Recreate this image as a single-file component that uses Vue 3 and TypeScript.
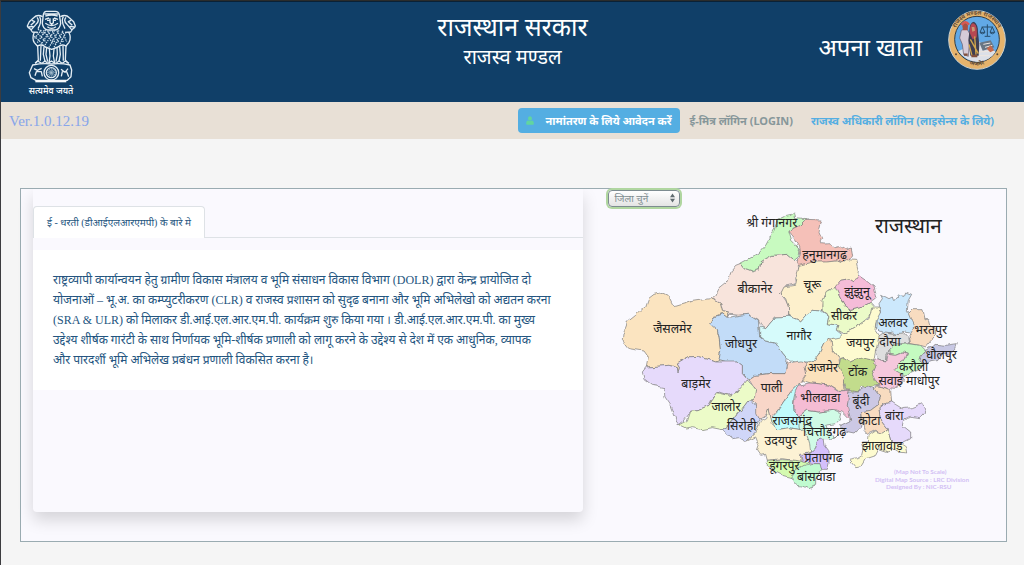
<script setup lang="ts">
import { ref } from 'vue'

interface District {
  name: string
  fill: string
  points: string
  x: number
  y: number
}

const selected = ref('')

const districts: District[] = [
  { name: 'बीकानेर', fill: '#f8e4dc', x: 438, y: 308, points: '393,220 405,235 430,244 450,238 455,215 470,205 490,195 535,192 545,200 555,208 570,215 565,225 573,240 560,260 563,280 530,287 515,310 530,330 540,350 538,380 500,380 470,415 455,405 448,390 415,372 390,375 365,372 355,382 362,365 340,360 335,340 318,330 305,325 320,315 330,295 355,275 368,240 380,225' },
  { name: 'श्री गंगानगर', fill: '#c8fac0', x: 488, y: 110, points: '393,220 430,200 450,188 470,165 495,120 505,90 530,78 545,75 557,66 560,85 595,88 575,105 537,123 545,150 560,165 573,180 570,195 555,208 545,200 535,192 490,195 470,205 455,215 450,238 430,244 405,235' },
  { name: 'हनुमानगढ़', fill: '#f5c0b8', x: 647, y: 206, points: '590,90 637,92 632,115 630,130 638,147 632,157 650,158 665,157 675,170 690,166 710,178 727,173 731,200 720,212 700,218 685,212 650,216 610,216 570,228 563,217 575,190 572,170 560,150 537,123 575,105' },
  { name: 'चूरू', fill: '#fdf0cc', x: 610, y: 296, points: '570,225 610,215 650,215 685,212 700,218 715,208 740,210 748,240 745,265 735,275 720,265 695,270 682,290 660,300 645,320 642,355 640,362 610,360 590,375 575,392 560,385 540,378 538,350 530,325 515,310 525,290 560,285 565,250' },
  { name: 'जैसलमेर', fill: '#fbe4c0', x: 190, y: 428, points: '305,325 250,333 200,348 190,340 178,315 160,306 135,312 118,325 110,348 80,375 55,395 42,430 40,450 60,475 105,482 118,500 112,530 145,528 180,525 205,532 207,548 212,530 205,518 235,500 265,498 300,508 320,515 330,510 335,480 330,440 325,420 305,400 310,380 340,370 355,382 362,365 340,360 335,340 318,330' },
  { name: 'जोधपुर', fill: '#c2dcf8', x: 396, y: 473, points: '302,400 310,382 340,370 355,382 390,375 415,372 448,392 452,440 470,452 500,458 518,485 535,505 528,550 480,550 440,555 420,568 400,550 400,525 385,515 360,520 345,515 330,510 335,480 330,440 325,420' },
  { name: 'नागौर', fill: '#d6fbfb', x: 570, y: 449, points: '452,410 470,415 500,380 540,378 575,392 590,375 610,360 640,362 660,375 655,400 690,405 685,420 705,435 695,445 665,445 645,460 630,490 615,515 585,515 560,517 535,505 518,485 500,458 470,452 452,440' },
  { name: 'सीकर', fill: '#ebfbc8', x: 705, y: 388, points: '682,290 690,315 705,345 725,360 760,350 785,335 795,345 780,380 755,400 725,420 705,430 685,418 690,405 655,400 660,375 642,360 642,330 655,303' },
  { name: 'झुंझुनू', fill: '#f5bcd8', x: 744, y: 317, points: '695,270 720,265 735,275 748,255 770,270 795,290 803,320 785,335 760,350 725,360 705,345 690,315 678,290' },
  { name: 'जयपुर', fill: '#fdfbd0', x: 754, y: 469, points: '785,370 788,350 810,350 815,370 800,400 798,420 812,440 808,465 800,480 795,510 760,505 725,515 705,502 690,505 670,480 665,460 670,445 695,440 705,430 725,420 755,400 780,385' },
  { name: 'अलवर', fill: '#cce8fc', x: 852, y: 411, points: '815,365 810,340 820,325 815,312 840,325 850,320 855,335 870,315 885,318 890,305 908,312 898,330 895,360 910,380 915,400 910,430 890,425 875,432 850,425 830,430 810,425 800,415 802,390' },
  { name: 'भरतपुर', fill: '#f8dcc0', x: 965, y: 431, points: '898,370 910,358 942,358 948,385 960,385 965,405 980,415 980,435 975,440 950,470 935,465 905,460 900,435 915,410' },
  { name: 'दौसा', fill: '#dedede', x: 843, y: 468, points: '810,440 830,425 855,430 885,428 900,445 903,462 880,460 860,460 840,480 830,500 830,515 810,510 800,480' },
  { name: 'करौली', fill: '#c4fac0', x: 914, y: 543, points: '840,480 855,465 900,460 935,465 950,480 935,495 935,515 945,530 915,545 885,558 870,550 855,535 875,515 890,505 895,488 880,485 860,495 840,492' },
  { name: 'धौलपुर', fill: '#c8c8e4', x: 997, y: 505, points: '935,500 950,480 965,470 980,462 1010,465 1045,460 1040,475 1020,495 1000,490 990,510 960,515 945,522 932,512' },
  { name: 'सवाई माधोपुर', fill: '#f5c8dc', x: 900, y: 583, points: '795,505 810,510 830,515 835,492 860,495 885,485 895,490 888,508 872,518 855,538 885,555 882,575 860,585 845,598 815,592 795,585 785,560 795,540' },
  { name: 'अजमेर', fill: '#fbe2bc', x: 641, y: 545, points: '630,490 645,460 665,445 670,480 690,505 693,530 710,555 703,580 705,600 685,600 660,585 630,580 605,578 580,570 565,580 590,555 585,530 595,518 615,510' },
  { name: 'टोंक', fill: '#c2dc8c', x: 746, y: 558, points: '695,505 705,502 725,515 760,503 795,510 800,530 790,550 800,570 810,585 780,590 760,588 745,605 710,598 703,575 710,560 698,545 690,525' },
  { name: 'पाली', fill: '#f8d6c8', x: 488, y: 606, points: '420,568 440,555 480,550 528,550 535,518 575,512 595,518 585,530 590,555 575,580 565,585 545,605 530,625 510,655 485,685 480,655 475,670 450,688 435,670 440,640 430,630 435,610 440,600' },
  { name: 'बाड़मेर', fill: '#e6dafb', x: 261, y: 594, points: '112,530 145,528 180,525 205,532 207,548 212,530 205,518 235,500 265,498 300,508 320,515 345,515 385,515 400,525 400,550 415,568 405,590 385,605 360,615 330,605 310,625 300,645 270,658 245,660 225,690 207,703 195,670 185,645 168,620 165,592 130,585 105,565 100,545' },
  { name: 'जालोर', fill: '#ecfbc8', x: 351, y: 663, points: '207,705 235,690 245,660 270,658 300,645 325,607 360,615 385,605 415,568 440,600 435,630 415,635 400,655 385,670 370,690 360,705 340,718 310,712 280,718 250,712 230,716' },
  { name: 'सिरोही', fill: '#d0d6f8', x: 398, y: 718, points: '415,635 430,632 440,650 440,670 450,690 440,710 440,725 410,753 390,742 370,745 345,725 340,718 360,705' },
  { name: 'राजसमंद', fill: '#c0fbfb', x: 550, y: 703, points: '485,685 500,670 510,655 530,625 545,605 565,585 575,580 580,590 560,600 553,630 555,660 570,678 600,688 600,720 585,740 575,718 540,712 505,718 490,700' },
  { name: 'चित्तौड़गढ़', fill: '#d0fbe6', x: 647, y: 737, points: '570,682 595,660 630,665 670,660 695,670 690,690 680,700 650,705 660,720 675,740 700,730 665,745 645,745 628,745 620,770 600,790 585,770 575,730 570,710' },
  { name: 'उदयपुर', fill: '#fcf2d4', x: 515, y: 763, points: '480,655 485,680 490,700 505,718 540,712 575,718 595,735 602,760 605,785 575,795 576,815 550,810 520,805 475,810 470,792 455,795 445,780 450,765 440,740 412,753 440,725 455,690 470,682' },
  { name: 'भीलवाडा', fill: '#f5bcd4', x: 634, y: 636, points: '570,585 600,578 630,580 660,585 685,602 720,600 720,625 715,645 725,665 725,690 700,665 670,660 630,665 595,660 570,680 555,665 555,640 560,610' },
  { name: 'बूंदी', fill: '#ccc8e4', x: 756, y: 643, points: '720,605 745,605 775,585 795,595 815,620 805,645 785,660 760,665 755,710 735,728 705,722 695,705 725,690 715,645' },
  { name: 'कोटा', fill: '#f8dcc0', x: 781, y: 703, points: '800,590 815,592 845,600 848,635 825,642 810,655 815,690 835,715 820,730 800,720 775,732 765,720 758,665 785,660 805,645 815,620 795,595' },
  { name: 'बांरा', fill: '#e6dafb', x: 856, y: 690, points: '825,642 848,635 880,655 910,652 940,640 950,665 935,682 905,678 885,685 880,705 905,725 905,745 875,760 845,750 835,715 815,690 810,655' },
  { name: 'झालावाड़', fill: '#fdfbd0', x: 820, y: 780, points: '780,735 800,722 820,728 835,718 845,750 875,760 890,770 893,788 865,785 850,775 840,785 810,775 800,795 770,805 755,830 740,832 722,810 745,805 760,795 765,775 760,755 778,755' },
  { name: 'डूंगरपुर', fill: '#d4fab0', x: 526, y: 838, points: '475,810 520,808 560,810 600,817 590,830 565,850 550,863 520,855 490,840 475,828' },
  { name: 'बांसवाडा', fill: '#c0fbd0', x: 622, y: 872, points: '560,840 585,825 610,820 638,820 635,840 620,865 620,885 600,895 585,888 565,885 545,860' },
  { name: 'प्रतापगढ', fill: '#d4c0fb', x: 644, y: 816, points: '620,770 628,745 642,742 645,765 660,785 660,820 655,840 635,840 630,820 605,818 580,815 575,792 600,790' },
]

const spokes = Array.from({ length: 12 }, (_, i) => i * 30)
</script>

<template>
  <div class="page">
    <header class="banner">
      <svg class="emblem" viewBox="0 0 150 258" role="img" aria-label="सत्यमेव जयते">
        <g fill="none" stroke="#e4edf4" stroke-width="4" stroke-linejoin="round">
          <path d="M52 14 Q54 3 62 4 L88 4 Q98 4 100 14 L104 40 Q101 58 88 60 L64 60 Q51 56 49 40Z" />
          <path d="M55 12 H98 M58 18 Q77 13 95 18 M57 28 L69 24 M84 24 L96 28 M63 31 H70 M83 31 H90 M72 25 V38 L77 43 L82 38 V25 M58 40 Q77 54 96 40 M64 50 Q77 60 90 50 M70 46 H84" />
          <path d="M50 20 Q34 12 23 23 L10 35 L4 48 Q6 55 13 57 L19 66 L36 67 M18 31 L26 35 L14 46 M33 22 Q42 32 30 43 L16 59 M41 20 Q49 34 36 56 M8 51 L22 49" />
          <path d="M103 20 Q119 12 130 23 L143 35 L148 48 Q147 55 140 57 L134 66 L117 67 M135 31 L127 35 L139 46 M120 22 Q111 32 123 43 L137 59 M112 20 Q104 34 117 56 M145 51 L131 49" />
          <path d="M25 66 Q17 85 25 98 L34 108 Q48 101 58 111 L77 118 L96 111 Q107 101 120 108 L129 97 Q137 83 128 66" />
          <path d="M35 108 L37 151 L28 160 M45 108 L43 152 M54 111 L52 133 L57 154 M62 113 L60 133 L65 155 M70 117 L72 138 L69 160 M84 117 L82 138 L86 160 M93 112 L94 133 L90 155 M101 110 L103 133 L99 154 M111 108 L112 152 M120 108 L118 150 L127 160" />
          <path d="M27 160 L35 153 L47 160 M48 160 L57 153 L65 160 M67 160 L76 153 L88 160 M90 160 L99 153 L108 160 M109 160 L118 153 L129 160" />
          <path d="M20 165 Q50 159 77 162 Q105 159 132 165 L137 180 L135 200 L124 211 H30 L15 203 L10 188Z" />
          <circle cx="76" cy="188" r="22" />
          <circle cx="76" cy="188" r="15" />
          <path d="M24 176 L34 181 L47 175 M27 197 L31 185 H46 L49 199 M126 176 L117 187 L105 178 M106 199 L109 185 H122 L128 200" />
        </g>
        <g fill="none" stroke="#cbdce8" stroke-width="4" stroke-dasharray="4 3">
          <path d="M36 57 L54 73 M31 66 L61 97 M25 78 L51 104 M52 61 L82 102 M65 63 L89 100 M79 62 L99 99 M93 62 L113 98 M109 62 L122 96 M120 67 L101 104 M110 65 L84 112 M99 61 L69 112 M86 61 L57 105 M73 61 L45 104 M59 60 L34 98 M46 60 L25 86" />
        </g>
        <g fill="none" stroke="#a7bfd0" stroke-width="2">
          <path v-for="angle in spokes" :key="angle" d="M76 188 V174" :transform="`rotate(${angle} 76 188)`" />
        </g>
        <path d="M28 211 H121 V217 H28Z" fill="#f4f7fa" />
        <text x="75" y="251" text-anchor="middle" class="motto">सत्यमेव जयते</text>
      </svg>
      <div class="titles">
        <h1>राजस्थान सरकार</h1>
        <h2>राजस्व मण्डल</h2>
      </div>
      <div class="brand">
        <span class="brand-name">अपना खाता</span>
        <svg class="seal" viewBox="0 0 174 180" role="img" aria-label="राजस्व मण्डल राजस्थान अजमेर">
          <defs>
            <path id="seal-top" d="M18 109 A72 74 0 1 1 156 109" />
            <path id="seal-bottom" d="M41 146 Q87 188 133 146" />
          </defs>
          <ellipse cx="87" cy="90" rx="85" ry="88" fill="#e5b36c" stroke="#c9d0cf" stroke-width="3" />
          <ellipse cx="87" cy="88" rx="67" ry="69" fill="#62a9e6" stroke="#343d42" stroke-width="3" />
          <path d="M31 124 L92 94 L143 126 Q125 153 87 157 Q51 151 31 124Z" fill="#dce0e8" />
          <path d="M94 98 L128 91 L139 112 L104 122Z" fill="#687684" />
          <path d="M106 103 L127 99 M111 112 L133 106 M85 126 L140 124 M78 137 L125 137" stroke="#eee6df" stroke-width="3" />
          <path d="M116 116 L128 106 L139 121 L127 127Z" fill="#c5694d" />
          <path d="M40 61 L56 55 L66 73 L61 139 L47 134 L43 103 L35 84Z" fill="#d5cbd8" stroke="#665868" stroke-width="2" />
          <path d="M43 47 Q50 30 60 46 L59 61 L45 61Z" fill="#a65143" />
          <path d="M41 45 Q52 29 63 44" fill="none" stroke="#d95850" stroke-width="7" />
          <path d="M64 67 Q64 36 78 35 Q91 44 90 67 L94 104 L92 137 H67 L61 91Z" fill="#3e3e52" />
          <path d="M65 68 Q66 35 79 41 Q89 47 86 82 L74 88Z" fill="#b64852" />
          <path d="M71 51 L79 51 L81 62 L73 65Z" fill="#c99a76" />
          <path d="M67 88 L91 131 M80 79 L84 134 M63 103 L72 137" stroke="#d1a64d" stroke-width="4" />
          <path d="M48 134 H59 M70 138 H88" stroke="#814f3b" stroke-width="7" />
          <g fill="none" stroke="#294e6c" stroke-width="3">
            <path d="M118 43 V78 M101 51 H135 M103 51 L96 67 H111 L103 51 M133 51 L126 67 H140 L133 51 M110 79 H127" />
            <path d="M96 68 Q103 75 111 68 M126 68 Q133 75 140 68" />
          </g>
          <circle cx="24" cy="133" r="3" fill="#5c4938" />
          <circle cx="148" cy="133" r="3" fill="#5c4938" />
          <text class="seal-text"><textPath href="#seal-top" startOffset="50%" text-anchor="middle">राजस्व मण्डल राजस्थान</textPath></text>
          <text class="seal-text"><textPath href="#seal-bottom" startOffset="50%" text-anchor="middle">अजमेर</textPath></text>
        </svg>
      </div>
    </header>

    <nav class="nav">
      <span class="version">Ver.1.0.12.19</span>
      <div class="links">
        <button type="button" class="apply">
          <svg class="user" viewBox="0 0 24 28" aria-hidden="true">
            <path d="M12 1 C8 1 6 4 6 8 C6 12 8 15 12 15 C16 15 18 12 18 8 C18 4 16 1 12 1Z M6 14 C2 15 0 18 0 24 Q0 27 3 27 H21 Q24 27 24 24 C24 18 22 15 18 14 Q12 19 6 14Z" fill="#61d5a0" />
          </svg>
          <span>नामांतरण के लिये आवेदन करें</span>
        </button>
        <a href="#login" class="login">ई-मित्र लॉगिन (LOGIN)</a>
        <a href="#officer" class="officer">राजस्व अधिकारी लॉगिन (लाइसेन्स के लिये)</a>
      </div>
    </nav>

    <main class="frame">
      <section class="card">
        <div class="tabs" role="tablist">
          <button id="about-tab" type="button" class="tab" role="tab" aria-selected="true" aria-controls="about">ई - धरती (डीआईएलआरएमपी) के बारे मे</button>
        </div>
        <div id="about" class="about" role="tabpanel" aria-labelledby="about-tab">
          <p>
            राष्ट्रव्यापी कार्यान्वयन हेतु ग्रामीण विकास मंत्रालय व भूमि संसाधन विकास विभाग (DOLR) द्वारा केन्द्र प्रायोजित दो<br>
            योजनाओं – भू.अ. का कम्प्युटरीकरण (CLR) व राजस्व प्रशासन को सुदृढ बनाना और भूमि अभिलेखो को अद्यतन करना<br>
            (SRA &amp; ULR) को मिलाकर डी.आई.एल.आर.एम.पी. कार्यक्रम शुरु किया गया । डी.आई.एल.आर.एम.पी. का मुख्य<br>
            उद्देश्य शीर्षक गारंटी के साथ निर्णायक भूमि-शीर्षक प्रणाली को लागू करने के उद्देश्य से देश में एक आधुनिक, व्यापक<br>
            और पारदर्शी भूमि अभिलेख प्रबंधन प्रणाली विकसित करना है।
          </p>
        </div>
      </section>

      <section class="map-side">
        <div class="picker">
          <select v-model="selected" aria-label="जिला चुनें">
            <option value="">जिला चुनें</option>
            <option v-for="d in districts" :key="d.name" :value="d.name">{{ d.name }}</option>
          </select>
          <svg class="arrows" viewBox="0 0 12 24" aria-hidden="true"><path d="M6 1 L12 10 H0Z M6 23 L0 14 H12Z" fill="#5f6b6f" /></svg>
        </div>
        <svg class="map" viewBox="0 50 1110 860" role="img" aria-label="राजस्थान">
          <defs>
            <filter id="border-detail" x="-5%" y="-5%" width="110%" height="110%">
              <feTurbulence type="fractalNoise" baseFrequency="0.04" numOctaves="2" seed="4" result="noise" />
              <feDisplacementMap in="SourceGraphic" in2="noise" scale="14" xChannelSelector="R" yChannelSelector="G" />
            </filter>
          </defs>
          <g filter="url(#border-detail)" stroke="#777" stroke-width="2" stroke-linejoin="round">
            <polygon v-for="d in districts" :key="d.name" :points="d.points" :fill="d.fill" />
          </g>
          <g class="labels">
            <text v-for="d in districts" :key="d.name" :x="d.x" :y="d.y">{{ d.name }}</text>
          </g>
          <text class="state" x="898" y="129">राजस्थान</text>
          <g class="credit">
            <text x="934" y="850">(Map Not To Scale)</text>
            <text x="939" y="874">Digital Map Source : LRC Division</text>
            <text x="929" y="895">Designed By : NIC-RSU</text>
          </g>
        </svg>
      </section>
    </main>
  </div>
</template>

<style>
body {
  margin: 0;
  background: #f5f5f5;
}
</style>

<style scoped>
.page {
  box-sizing: border-box;
  min-height: 100vh;
  border-left: 1px solid #3c3c3f;
  border-top: 1px solid #2b2c2b;
  background: #f5f5f5;
  font-family: "Noto Sans", "Noto Sans Devanagari", sans-serif;
}
.banner {
  display: grid;
  grid-template-columns: 1fr auto 1fr;
  height: 101px;
  border-top: 1px solid #0a2136;
  box-sizing: border-box;
  background: #103f68;
  color: #fff;
}
.emblem {
  width: 50px;
  height: 86px;
  margin: 8px 0 0 25px;
}
.motto {
  fill: #fff;
  font-size: 27px;
  font-weight: 500;
}
.titles {
  text-align: center;
  padding-top: 7px;
}
h1, h2 {
  margin: 0;
  font-weight: 400;
}
h1 {
  font-size: 25px;
  line-height: 34px;
}
h2 {
  font-size: 20px;
  line-height: 28px;
}
.brand {
  display: flex;
  justify-content: flex-end;
  align-items: flex-start;
  gap: 26px;
  padding: 8px 18px 0 0;
}
.brand-name {
  font-size: 24px;
  line-height: 34px;
  padding-top: 20px;
}
.seal {
  width: 58px;
  height: 60px;
}
.seal-text {
  fill: #574332;
  font-size: 18px;
  font-weight: 600;
}
.nav {
  display: flex;
  align-items: center;
  justify-content: space-between;
  height: 37px;
  box-sizing: border-box;
  padding: 0 30px 0 8px;
  background: #e8e0d6;
}
.version {
  font: 15px/20px "Liberation Serif", serif;
  color: #87a5ea;
}
.links {
  display: flex;
  align-items: center;
}
.links a {
  font-size: 11px;
  font-weight: 700;
  text-decoration: none;
  white-space: nowrap;
}
.apply {
  display: flex;
  align-items: center;
  gap: 12px;
  height: 25px;
  padding: 0 8px;
  border: 0;
  border-radius: 4px;
  background: #54aee2;
  color: #fff;
  font: 700 11px/20px "Noto Sans", "Noto Sans Devanagari", sans-serif;
  white-space: nowrap;
}
.user {
  width: 8px;
  height: 9px;
}
.login {
  margin-left: 10px;
  color: #87979a;
}
.officer {
  margin-left: 18px;
  color: #54aee2;
}
.frame {
  display: grid;
  grid-template-columns: minmax(0, 551fr) minmax(0, 423fr);
  box-sizing: border-box;
  height: 354px;
  margin: 49px 17px 0 19px;
  padding-left: 12px;
  border: 1px solid #9aabb1;
  background: #faf9fe;
}
.card {
  height: 323px;
  border-radius: 0 0 4px 4px;
  background: #faf9fe;
  box-shadow: 0 8px 16px rgba(0, 0, 0, 0.15);
  clip-path: inset(0 -30px -30px -30px);
  color: #245580;
}
.tabs {
  display: flex;
  height: 49px;
  padding-top: 17px;
  box-sizing: border-box;
  border-bottom: 1px solid #dee2e6;
}
.tab {
  height: 32px;
  box-sizing: border-box;
  padding: 0 13px;
  border: 1px solid #dee2e6;
  border-bottom: 0;
  border-radius: 4px 4px 0 0;
  background: #fff;
  color: #245580;
  font: 10px/20px "Liberation Serif", "Noto Sans Devanagari", serif;
  white-space: nowrap;
}
.about {
  margin-top: 12px;
  padding: 20px;
  background: #fff;
}
.about p {
  margin: 0;
  font: 12px/20px "Liberation Serif", "Noto Sans Devanagari", serif;
  white-space: nowrap;
}
.map-side {
  padding-left: 25px;
}
.picker {
  display: flex;
  position: relative;
  box-sizing: border-box;
  width: 72px;
  height: 18px;
  padding-top: 1px;
}
select {
  width: 100%;
  height: 17px;
  box-sizing: border-box;
  appearance: none;
  padding: 0 5px;
  border: 1px solid #7d8c90;
  border-radius: 4px;
  outline: 0;
  background: linear-gradient(#fff, #e4e4e4);
  box-shadow: 0 0 0 2px #b0d6a0;
  color: #7d8c90;
  font: 10px/15px "Liberation Serif", "Noto Sans Devanagari", serif;
}
.arrows {
  position: absolute;
  right: 5px;
  top: 4px;
  width: 5px;
  height: 10px;
  pointer-events: none;
}
.map {
  display: block;
  width: 370px;
  max-width: 100%;
  margin-left: 1px;
}
.labels {
  fill: #222;
  font-size: 37px;
  text-anchor: middle;
}
.state {
  fill: #222;
  font-size: 62px;
  text-anchor: middle;
}
.credit {
  fill: #d2bff4;
  font-family: Lato, sans-serif;
  font-size: 19px;
  font-weight: 700;
  text-anchor: middle;
}
</style>
